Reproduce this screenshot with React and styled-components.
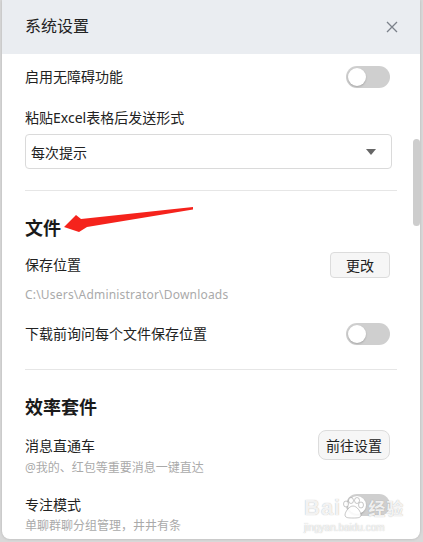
import React from 'react';
import styled, { createGlobalStyle } from 'styled-components';

const GlobalStyle = createGlobalStyle`
  html, body {
    margin: 0;
    padding: 0;
    background: #d9d9d9;
    font-family: "Noto Sans", "Noto Sans CJK SC", sans-serif;
  }
`;

const Page = styled.div`
  position: relative;
  width: 423px;
  height: 542px;
  overflow: hidden;
`;

const Dialog = styled.div`
  margin-left: 2px;
  width: 418px;
  height: 539px;
  background: #fff;
  border-radius: 0 0 8px 8px;
  box-shadow: 0 0 3px rgba(0, 0, 0, 0.18);
  display: flex;
  flex-direction: column;
  overflow: hidden;
`;

const Header = styled.div`
  height: 54px;
  flex-shrink: 0;
  background: #eaedf1;
  display: flex;
  align-items: center;
  justify-content: space-between;
  padding: 0 22px 0 23px;
`;

const Title = styled.div`
  font-size: 16px;
  color: #222;
  line-height: 20px;
  margin-top: -2px;
`;

const CloseButton = styled.button`
  width: 13px;
  height: 13px;
  padding: 0;
  border: none;
  background: none;
  display: flex;
  align-items: center;
  justify-content: center;
  cursor: pointer;
  margin-top: -1px;
`;

const Body = styled.div`
  flex: 1;
  display: flex;
  min-height: 0;
`;

const Content = styled.div`
  flex: 1;
  padding: 0 21px 0 23px;
  display: flex;
  flex-direction: column;
`;

const Track = styled.div`
  width: 7px;
  flex-shrink: 0;
`;

const Thumb = styled.div`
  margin-top: 85px;
  height: 87px;
  width: 7px;
  border-radius: 4px;
  background: #cdcdcd;
`;

const Row = styled.div`
  display: flex;
  align-items: center;
  justify-content: space-between;
  height: ${p => p.$h || 22}px;
  margin-top: ${p => p.$mt || 0}px;
`;

const Label = styled.div`
  font-size: 14px;
  line-height: 20px;
  color: #222;
  margin-top: ${p => p.$mt || 0}px;
`;

const Hint = styled.div`
  font-size: 12px;
  line-height: 18px;
  color: #aaa;
  letter-spacing: ${p => p.$ls || 0}px;
  margin-top: ${p => p.$mt || 0}px;
`;

const SectionTitle = styled.div`
  font-size: 18px;
  font-weight: 700;
  line-height: 26px;
  color: #1a1a1a;
  margin-top: 24px;
`;

const Divider = styled.div`
  height: 1px;
  background: #e6e6e6;
  margin: ${p => p.$mt}px -5px 0 0;
`;

const Switch = styled.div`
  width: 44px;
  height: 22px;
  border-radius: 11px;
  background: #cfcfcf;
  margin-right: 2px;
  display: flex;
  align-items: center;
  padding-left: 2px;
  box-sizing: border-box;
`;

const Knob = styled.div`
  width: 18px;
  height: 18px;
  border-radius: 50%;
  background: #fff;
  box-shadow: 0 1px 2px rgba(0, 0, 0, 0.2);
`;

const Select = styled.div`
  margin-top: 6px;
  height: 35px;
  box-sizing: border-box;
  border: 1px solid #dadada;
  border-radius: 4px;
  display: flex;
  align-items: center;
  justify-content: space-between;
  padding: 0 15px 0 5px;
  font-size: 14px;
  color: #222;
`;

const Caret = styled.div`
  width: 0;
  height: 0;
  border-left: 5px solid transparent;
  border-right: 5px solid transparent;
  border-top: 6px solid #666;
`;

const Button = styled.button`
  height: ${p => p.$h}px;
  padding: 0 ${p => p.$px}px;
  border: 1px solid #dcdcdc;
  border-radius: ${p => p.$r}px;
  background: #f6f6f6;
  font-family: inherit;
  font-size: 14px;
  color: #222;
  margin-right: 2px;
  cursor: pointer;
`;

const TwoLine = styled.div`
  display: flex;
  justify-content: space-between;
  align-items: flex-start;
  margin-top: ${p => p.$mt}px;
`;

const TextCol = styled.div`
  display: flex;
  flex-direction: column;
  padding-top: ${p => p.$pt || 0}px;
`;

const Side = styled.div`
  margin-top: ${p => p.$mt || 0}px;
`;

const Arrow = styled.svg`
  position: absolute;
  left: 0;
  top: 0;
  pointer-events: none;
`;

const Watermark = styled.div`
  position: absolute;
  left: 304px;
  top: 496px;
  display: flex;
  flex-direction: column;
  color: rgba(255, 255, 255, 0.85);
  text-shadow: 0 0 1px rgba(120, 120, 120, 0.6);
  pointer-events: none;
`;

const WmTop = styled.div`
  display: flex;
  align-items: center;
  font-family: "Liberation Sans", sans-serif;
  font-size: 22px;
  font-weight: 700;
  letter-spacing: 1px;
  line-height: 24px;
`;

const WmCn = styled.span`
  font-family: "Noto Sans CJK SC", sans-serif;
  font-size: 17px;
  margin-left: 3px;
`;

const WmUrl = styled.div`
  font-family: "Liberation Sans", sans-serif;
  font-size: 10px;
  line-height: 12px;
  margin-top: 2px;
`;

const Toggle = () => (
  <Switch>
    <Knob />
  </Switch>
);

export default function App() {
  return (
    <Page>
      <GlobalStyle />
      <Dialog>
        <Header>
          <Title>系统设置</Title>
          <CloseButton>
            <svg width="12" height="12" viewBox="0 0 12 12">
              <path d="M1 1L11 11M11 1L1 11" stroke="#7b818a" strokeWidth="1.3" fill="none" />
            </svg>
          </CloseButton>
        </Header>
        <Body>
          <Content>
            <Row $h={46}>
              <Label>启用无障碍功能</Label>
              <Toggle />
            </Row>
            <Label $mt={8}>粘贴Excel表格后发送形式</Label>
            <Select>
              每次提示
              <Caret />
            </Select>
            <Divider $mt={21} />

            <SectionTitle>文件</SectionTitle>
            <Row $h={26} $mt={11}>
              <Label>保存位置</Label>
              <Button $h={26} $px={15} $r={4}>更改</Button>
            </Row>
            <Hint $mt={8} $ls={0.2}>C:\Users\Administrator\Downloads</Hint>
            <Row $h={22} $mt={19}>
              <Label>下载前询问每个文件保存位置</Label>
              <Toggle />
            </Row>
            <Divider $mt={24} />

            <SectionTitle>效率套件</SectionTitle>
            <TwoLine $mt={10}>
              <TextCol $pt={6}>
                <Label>消息直通车</Label>
                <Hint $mt={3}>@我的、红包等重要消息一键直达</Hint>
              </TextCol>
              <Button $h={30} $px={7} $r={8}>前往设置</Button>
            </TwoLine>
            <TwoLine $mt={18}>
              <TextCol>
                <Label>专注模式</Label>
                <Hint $mt={2}>单聊群聊分组管理，井井有条</Hint>
              </TextCol>
              <Side $mt={-1}>
                <Toggle />
              </Side>
            </TwoLine>
          </Content>
          <Track>
            <Thumb />
          </Track>
        </Body>
      </Dialog>

      <Arrow width="423" height="542" viewBox="0 0 423 542">
        <polygon
          points="64,227 76,215 81,219 193,207 193,209.5 87,227 79,232"
          fill="#f5231c"
        />
      </Arrow>

      <Watermark>
        <WmTop>
          Bai
          <svg width="24" height="22" viewBox="0 0 24 22">
            <g fill="rgba(255,255,255,0.9)" stroke="rgba(140,140,140,0.6)" strokeWidth="0.8">
              <ellipse cx="5" cy="7" rx="2.5" ry="3" />
              <ellipse cx="10" cy="3.5" rx="2.5" ry="3" />
              <ellipse cx="16" cy="3.5" rx="2.5" ry="3" />
              <ellipse cx="20" cy="8" rx="2.5" ry="3" />
              <path d="M12 9c-4 0-8 6-8 9 0 3 4 3 8 3s8 0 8-3c0-3-4-9-8-9z" />
            </g>
          </svg>
          <WmCn>经验</WmCn>
        </WmTop>
        <WmUrl>jingyan.baidu.com</WmUrl>
      </Watermark>
    </Page>
  );
}
